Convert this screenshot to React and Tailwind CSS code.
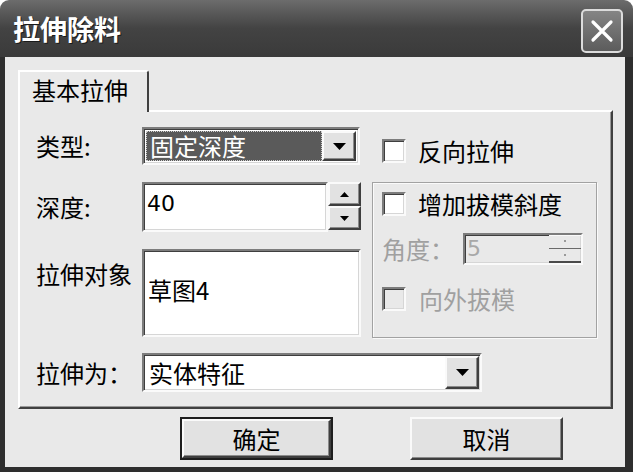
import React from 'react';

const FONT = { fontFamily: '"Noto Sans CJK SC", "Liberation Sans", sans-serif' };

const SUNKEN =
  'border-2 border-t-[#7c7c7c] border-l-[#7c7c7c] border-b-[#fafafa] border-r-[#fafafa] shadow-[inset_1px_1px_0_#3e3e3e,inset_-1px_-1px_0_#d6d6d6]';
const RAISED =
  'border-2 border-t-[#fafafa] border-l-[#fafafa] border-b-[#3e3e3e] border-r-[#3e3e3e] shadow-[inset_-1px_-1px_0_#8a8a8a] bg-[#e2e2e2]';

function Arrow({ up, small, color = '#000' }) {
  const w = small ? 9 : 13;
  const h = small ? 5 : 7;
  return (
    <svg width={w} height={h} viewBox={`0 0 ${w} ${h}`}>
      <polygon
        points={up ? `0,${h} ${w},${h} ${w / 2},0` : `0,0 ${w},0 ${w / 2},${h}`}
        fill={color}
      />
    </svg>
  );
}

function DropButton() {
  return (
    <div className={`${RAISED} w-[34px] h-full flex items-center justify-center`}>
      <Arrow />
    </div>
  );
}

function CheckBox({ disabled }) {
  return (
    <div
      className={`w-[24px] h-[24px] ${SUNKEN} ${disabled ? 'bg-[#e9e9e9]' : 'bg-white'}`}
    />
  );
}

function PushButton({ label, primary }) {
  return (
    <div
      className={`w-[153px] h-[43px] ${
        primary ? 'border-2 border-[#1e1e1e]' : ''
      } flex`}
    >
      <div
        className={`flex-1 flex items-center justify-center text-[24px] leading-none text-black ${RAISED}`}
      >
        {label}
      </div>
    </div>
  );
}

export default function App() {
  return (
    <div className="w-[633px] h-[472px] bg-white flex flex-col" style={FONT}>
      {/* Title bar */}
      <div className="h-[57px] rounded-t-[9px] bg-gradient-to-b from-[#6c6c6c] via-[#434343] to-[#3a3a3a] flex items-center justify-between pl-[13px] pr-[10px]">
        <span className="text-white font-bold text-[27px] leading-none [text-shadow:1px_1px_0_#1a1a1a]">
          拉伸除料
        </span>
        <div className="w-[42px] h-[44px] mt-[4px] rounded-[5px] border-2 border-[#dcdcdc] bg-gradient-to-b from-[#858585] to-[#5c5c5c] flex items-center justify-center">
          <svg width="26" height="26" viewBox="0 0 26 26">
            <path d="M4 4 L22 22 M22 4 L4 22" stroke="#fff" strokeWidth="3.2" strokeLinecap="round" />
          </svg>
        </div>
      </div>

      {/* Body */}
      <div className="flex-1 bg-[#e9e9e9] border-l-[5px] border-r-[8px] border-b-[5px] border-[#2e2e2e] flex flex-col">
        {/* Tab */}
        <div className="ml-[13px] mt-[13px] relative z-10 -mb-[2px] w-[131px] h-[42px] bg-[#e9e9e9] border-t-2 border-l-2 border-r-2 border-t-white border-l-white border-r-[#404040] rounded-tr-[3px] flex items-start pl-[12px] pt-[6px]">
          <span className="text-[24px] leading-none text-black">基本拉伸</span>
        </div>

        {/* Panel */}
        <div className="ml-[13px] w-[595px] h-[299px] border-2 border-t-white border-l-white border-r-[#404040] border-b-[#404040] shadow-[inset_-1px_-1px_0_#9a9a9a] pl-[16px] pt-[15px] flex flex-col text-[24px] leading-none text-black">
          <div className="flex">
            {/* Left column */}
            <div className="flex flex-col">
              <div className="flex items-center h-[38px]">
                <span className="w-[106px]">类型:</span>
                <div className={`w-[218px] h-[38px] bg-white ${SUNKEN} flex items-stretch p-[2px]`}>
                  <div className="flex-1 bg-[#5a5a5a] border border-dotted border-[#d0d0d0] flex items-center pl-[3px] text-white">
                    固定深度
                  </div>
                  <DropButton />
                </div>
              </div>

              <div className="flex mt-[17px] h-[50px]">
                <span className="w-[106px] self-center">深度:</span>
                <div className={`w-[186px] h-[50px] bg-white ${SUNKEN} pl-[3px] pt-[9px] text-[22px]`} style={{ fontFamily: '"DejaVu Sans", "Liberation Sans", sans-serif' }}>
                  40
                </div>
                <div className="w-[33px] h-[48px] flex flex-col">
                  <div className={`${RAISED} flex-1 flex items-center justify-center`}>
                    <Arrow up small />
                  </div>
                  <div className={`${RAISED} flex-1 flex items-center justify-center`}>
                    <Arrow small />
                  </div>
                </div>
              </div>

              <div className="flex mt-[17px]">
                <span className="w-[106px] pt-[13px]">拉伸对象</span>
                <div className={`w-[219px] h-[88px] bg-white ${SUNKEN} flex items-center pl-[4px] pb-[6px]`} style={{ fontFamily: '"Noto Sans CJK SC", "Liberation Serif", serif' }}>
                  草图4
                </div>
              </div>
            </div>

            {/* Right column */}
            <div className="ml-[11px] w-[225px] flex flex-col">
              <div className="h-[38px] flex items-center pl-[10px] pt-[9px]">
                <CheckBox />
                <span className="ml-[12px]">反向拉伸</span>
              </div>
              <div className="mt-[17px] h-[156px] border border-[#a2a2a2] shadow-[inset_1px_1px_0_#fafafa,1px_1px_0_#fafafa] pl-[9px] pt-[9px] flex flex-col">
                <div className="flex items-center">
                  <CheckBox />
                  <span className="ml-[12px]">增加拔模斜度</span>
                </div>
                <div className="flex items-center mt-[17px]">
                  <span className="w-[81px] text-[#a0a0a0]">角度：</span>
                  <div className={`w-[120px] h-[32px] bg-[#e9e9e9] ${SUNKEN} flex items-stretch`}>
                    <span className="flex-1 pl-[2px] text-[#a8a8a8] text-[22px] leading-[28px]" style={{ fontFamily: '"DejaVu Sans", "Liberation Sans", sans-serif' }}>
                      5
                    </span>
                    <div className="w-[32px] flex flex-col">
                      <div className="flex-1 border-b border-[#6a6a6a] shadow-[inset_0_1px_0_#fafafa] flex items-center justify-center">
                        <div className="w-[2px] h-[2px] bg-[#9a9a9a]" />
                      </div>
                      <div className="flex-1 border-b-2 border-[#4a4a4a] flex items-center justify-center">
                        <div className="w-[2px] h-[2px] bg-[#9a9a9a]" />
                      </div>
                    </div>
                  </div>
                </div>
                <div className="flex items-center mt-[22px]">
                  <CheckBox disabled />
                  <span className="ml-[13px] text-[#a0a0a0]">向外拔模</span>
                </div>
              </div>
            </div>
          </div>

          {/* Extrude as */}
          <div className="flex items-center mt-[15px]">
            <span className="w-[106px]">拉伸为：</span>
            <div className={`w-[340px] h-[39px] bg-white ${SUNKEN} flex items-stretch p-[1px]`}>
              <div className="flex-1 flex items-center pl-[4px]">实体特征</div>
              <DropButton />
            </div>
          </div>
        </div>

        {/* Buttons */}
        <div className="flex mt-[8px] ml-[175px] gap-[77px]">
          <PushButton label="确定" primary />
          <PushButton label="取消" />
        </div>
      </div>
    </div>
  );
}
